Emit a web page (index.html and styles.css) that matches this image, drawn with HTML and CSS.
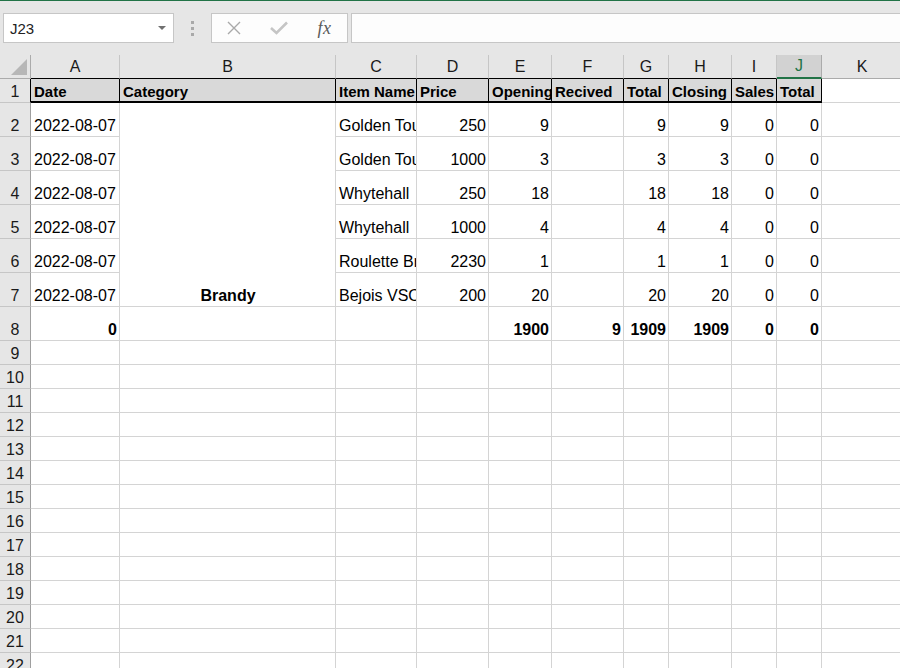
FILE: index.html
```html
<!DOCTYPE html>
<html>
<head>
<meta charset="utf-8">
<link rel="stylesheet" href="styles.css">
</head>
<body>
<div class="app">
  <div class="toolbar">
    <div class="namebox">
      <span class="namebox-text">J23</span>
      <span class="namebox-arrow"></span>
    </div>
    <div class="grip"><span></span><span></span><span></span></div>
    <div class="fbuttons">
      <span class="fbtn">
        <svg width="16" height="16" viewBox="0 0 16 16"><path d="M2 2 L14 14 M14 2 L2 14" stroke="#a9a9a9" stroke-width="1.4" fill="none"/></svg>
      </span>
      <span class="fbtn">
        <svg width="20" height="14" viewBox="0 0 20 14"><path d="M2 7 L7.5 12 L18 1.5" stroke="#c5c5c5" stroke-width="2.6" fill="none"/></svg>
      </span>
      <span class="fbtn fx">fx</span>
    </div>
    <div class="formula"></div>
  </div>

  <div class="sheet">
    <!-- column header row -->
    <div class="corner"><svg width="30" height="23" viewBox="0 0 30 23"><path d="M11 20 L27 20 L27 4 Z" fill="#b7b7b7"/></svg></div>
    <div class="ch">A</div><div class="ch">B</div><div class="ch">C</div><div class="ch">D</div><div class="ch">E</div><div class="ch">F</div><div class="ch">G</div><div class="ch">H</div><div class="ch">I</div><div class="ch ch-sel">J</div><div class="ch ch-plain">K</div>

    <!-- row 1 -->
    <div class="rh rh-1">1</div>
    <div class="c hd">Date</div><div class="c hd">Category</div><div class="c hd">Item Name</div><div class="c hd">Price</div><div class="c hd">Opening</div><div class="c hd">Recived</div><div class="c hd">Total</div><div class="c hd">Closing</div><div class="c hd">Sales</div><div class="c hd">Total</div><div class="c"></div>

    <!-- row 2 -->
    <div class="rh">2</div>
    <div class="c">2022-08-07</div><div class="c merged b">Brandy</div><div class="c">Golden Touch</div><div class="c n">250</div><div class="c n">9</div><div class="c"></div><div class="c n">9</div><div class="c n">9</div><div class="c n">0</div><div class="c n">0</div><div class="c"></div>

    <!-- row 3 -->
    <div class="rh">3</div>
    <div class="c">2022-08-07</div><div class="c">Golden Touch</div><div class="c n">1000</div><div class="c n">3</div><div class="c"></div><div class="c n">3</div><div class="c n">3</div><div class="c n">0</div><div class="c n">0</div><div class="c"></div>

    <!-- row 4 -->
    <div class="rh">4</div>
    <div class="c">2022-08-07</div><div class="c">Whytehall</div><div class="c n">250</div><div class="c n">18</div><div class="c"></div><div class="c n">18</div><div class="c n">18</div><div class="c n">0</div><div class="c n">0</div><div class="c"></div>

    <!-- row 5 -->
    <div class="rh">5</div>
    <div class="c">2022-08-07</div><div class="c">Whytehall</div><div class="c n">1000</div><div class="c n">4</div><div class="c"></div><div class="c n">4</div><div class="c n">4</div><div class="c n">0</div><div class="c n">0</div><div class="c"></div>

    <!-- row 6 -->
    <div class="rh">6</div>
    <div class="c">2022-08-07</div><div class="c">Roulette Brandy</div><div class="c n">2230</div><div class="c n">1</div><div class="c"></div><div class="c n">1</div><div class="c n">1</div><div class="c n">0</div><div class="c n">0</div><div class="c"></div>

    <!-- row 7 -->
    <div class="rh">7</div>
    <div class="c">2022-08-07</div><div class="c">Bejois VSO</div><div class="c n">200</div><div class="c n">20</div><div class="c"></div><div class="c n">20</div><div class="c n">20</div><div class="c n">0</div><div class="c n">0</div><div class="c"></div>

    <!-- row 8 -->
    <div class="rh">8</div>
    <div class="c n b">0</div><div class="c"></div><div class="c"></div><div class="c"></div><div class="c n b">1900</div><div class="c n b">9</div><div class="c n b">1909</div><div class="c n b">1909</div><div class="c n b">0</div><div class="c n b">0</div><div class="c"></div>

    <!-- rows 9-22 -->
    <div class="rh">9</div><div class="c"></div><div class="c"></div><div class="c"></div><div class="c"></div><div class="c"></div><div class="c"></div><div class="c"></div><div class="c"></div><div class="c"></div><div class="c"></div><div class="c"></div>
    <div class="rh">10</div><div class="c"></div><div class="c"></div><div class="c"></div><div class="c"></div><div class="c"></div><div class="c"></div><div class="c"></div><div class="c"></div><div class="c"></div><div class="c"></div><div class="c"></div>
    <div class="rh">11</div><div class="c"></div><div class="c"></div><div class="c"></div><div class="c"></div><div class="c"></div><div class="c"></div><div class="c"></div><div class="c"></div><div class="c"></div><div class="c"></div><div class="c"></div>
    <div class="rh">12</div><div class="c"></div><div class="c"></div><div class="c"></div><div class="c"></div><div class="c"></div><div class="c"></div><div class="c"></div><div class="c"></div><div class="c"></div><div class="c"></div><div class="c"></div>
    <div class="rh">13</div><div class="c"></div><div class="c"></div><div class="c"></div><div class="c"></div><div class="c"></div><div class="c"></div><div class="c"></div><div class="c"></div><div class="c"></div><div class="c"></div><div class="c"></div>
    <div class="rh">14</div><div class="c"></div><div class="c"></div><div class="c"></div><div class="c"></div><div class="c"></div><div class="c"></div><div class="c"></div><div class="c"></div><div class="c"></div><div class="c"></div><div class="c"></div>
    <div class="rh">15</div><div class="c"></div><div class="c"></div><div class="c"></div><div class="c"></div><div class="c"></div><div class="c"></div><div class="c"></div><div class="c"></div><div class="c"></div><div class="c"></div><div class="c"></div>
    <div class="rh">16</div><div class="c"></div><div class="c"></div><div class="c"></div><div class="c"></div><div class="c"></div><div class="c"></div><div class="c"></div><div class="c"></div><div class="c"></div><div class="c"></div><div class="c"></div>
    <div class="rh">17</div><div class="c"></div><div class="c"></div><div class="c"></div><div class="c"></div><div class="c"></div><div class="c"></div><div class="c"></div><div class="c"></div><div class="c"></div><div class="c"></div><div class="c"></div>
    <div class="rh">18</div><div class="c"></div><div class="c"></div><div class="c"></div><div class="c"></div><div class="c"></div><div class="c"></div><div class="c"></div><div class="c"></div><div class="c"></div><div class="c"></div><div class="c"></div>
    <div class="rh">19</div><div class="c"></div><div class="c"></div><div class="c"></div><div class="c"></div><div class="c"></div><div class="c"></div><div class="c"></div><div class="c"></div><div class="c"></div><div class="c"></div><div class="c"></div>
    <div class="rh">20</div><div class="c"></div><div class="c"></div><div class="c"></div><div class="c"></div><div class="c"></div><div class="c"></div><div class="c"></div><div class="c"></div><div class="c"></div><div class="c"></div><div class="c"></div>
    <div class="rh">21</div><div class="c"></div><div class="c"></div><div class="c"></div><div class="c"></div><div class="c"></div><div class="c"></div><div class="c"></div><div class="c"></div><div class="c"></div><div class="c"></div><div class="c"></div>
    <div class="rh">22</div><div class="c"></div><div class="c"></div><div class="c"></div><div class="c"></div><div class="c"></div><div class="c"></div><div class="c"></div><div class="c"></div><div class="c"></div><div class="c"></div><div class="c"></div>
  </div>
</div>
</body>
</html>
```
FILE: styles.css
```css
* { box-sizing: border-box; }
html, body { margin: 0; padding: 0; }
body {
  width: 900px;
  height: 668px;
  overflow: hidden;
  background: #e6e6e6;
  font-family: "Liberation Sans", Arial, sans-serif;
  color: #000;
}
.app {
  display: flex;
  flex-direction: column;
  height: 668px;
  overflow: hidden;
}

/* ---------- toolbar ---------- */
.toolbar {
  flex: none;
  height: 55px;
  border-top: 1px solid #217346;
  display: flex;
  align-items: flex-start;
  padding: 12px 0 0 3px;
  background: #e6e6e6;
}
.namebox {
  flex: none;
  width: 171px;
  height: 30px;
  background: #fff;
  border: 1px solid #c6c6c6;
  display: flex;
  align-items: center;
  justify-content: space-between;
  padding: 0 7px 0 6px;
  font-size: 15px;
  color: #222;
}
.namebox-arrow {
  width: 0;
  height: 0;
  border-left: 4px solid transparent;
  border-right: 4px solid transparent;
  border-top: 4px solid #707070;
}
.grip {
  flex: none;
  width: 37px;
  height: 30px;
  display: flex;
  flex-direction: column;
  align-items: center;
  justify-content: center;
  gap: 3px;
}
.grip span {
  width: 3px;
  height: 3px;
  background: #a9a9a9;
}
.fbuttons {
  flex: none;
  width: 137px;
  height: 30px;
  background: #fdfdfd;
  border: 1px solid #c6c6c6;
  display: grid;
  grid-template-columns: 44px 46px 45px;
  align-items: center;
  justify-items: center;
}
.fbtn {
  display: flex;
  align-items: center;
  justify-content: center;
}
.fx {
  font-family: "Liberation Serif", "Times New Roman", serif;
  font-style: italic;
  font-size: 18px;
  color: #5a5a5a;
  letter-spacing: 0.5px;
}
.formula {
  flex: 1;
  margin-left: 3px;
  height: 30px;
  background: #fdfdfd;
  border: 1px solid #c6c6c6;
  border-right: none;
}

/* ---------- sheet grid ---------- */
.sheet {
  flex: none;
  display: grid;
  grid-template-columns: 31px 89px 216px 81px 72px 63px 72px 45px 63px 45px 45px 81px;
  grid-template-rows: 24px 24px repeat(7, 34px) repeat(14, 24px);
  background: #fff;
  font-size: 16px;
  width: 903px;
}
.corner {
  background: #e6e6e6;
  border-right: 1px solid #ababab;
  border-bottom: 1px solid #ababab;
  display: flex;
}
.ch {
  background: #e6e6e6;
  border-right: 1px solid #c6c6c6;
  border-bottom: 1px solid #000;
  display: flex;
  align-items: center;
  justify-content: center;
  color: #1a1a1a;
}
.ch-sel {
  background: #d2d2d2;
  color: #217346;
  border-bottom: 2px solid #217346;
  border-right-color: #ababab;
}
.ch-plain {
  border-bottom-color: #ababab;
}
.rh {
  background: #e6e6e6;
  border-right: 1px solid #9f9f9f;
  border-bottom: 1px solid #c6c6c6;
  display: flex;
  align-items: flex-end;
  justify-content: center;
  padding-bottom: 1px;
  line-height: 18px;
  color: #1a1a1a;
}
.rh-1 {
  border-right-color: #000;
}
.c {
  border-right: 1px solid #d4d4d4;
  border-bottom: 1px solid #d4d4d4;
  display: flex;
  align-items: flex-end;
  padding: 0 2px 1px 3px;
  line-height: 18px;
  white-space: nowrap;
  overflow: hidden;
}
.n { justify-content: flex-end; }
.b { font-weight: bold; font-size: 16px; }
.hd {
  background: #d9d9d9;
  font-weight: bold;
  font-size: 15px;
  padding-bottom: 0;
  border-right: 1px solid #000;
  border-bottom: 2px solid #000;
}
.merged {
  grid-row: span 6;
  justify-content: center;
}
```
